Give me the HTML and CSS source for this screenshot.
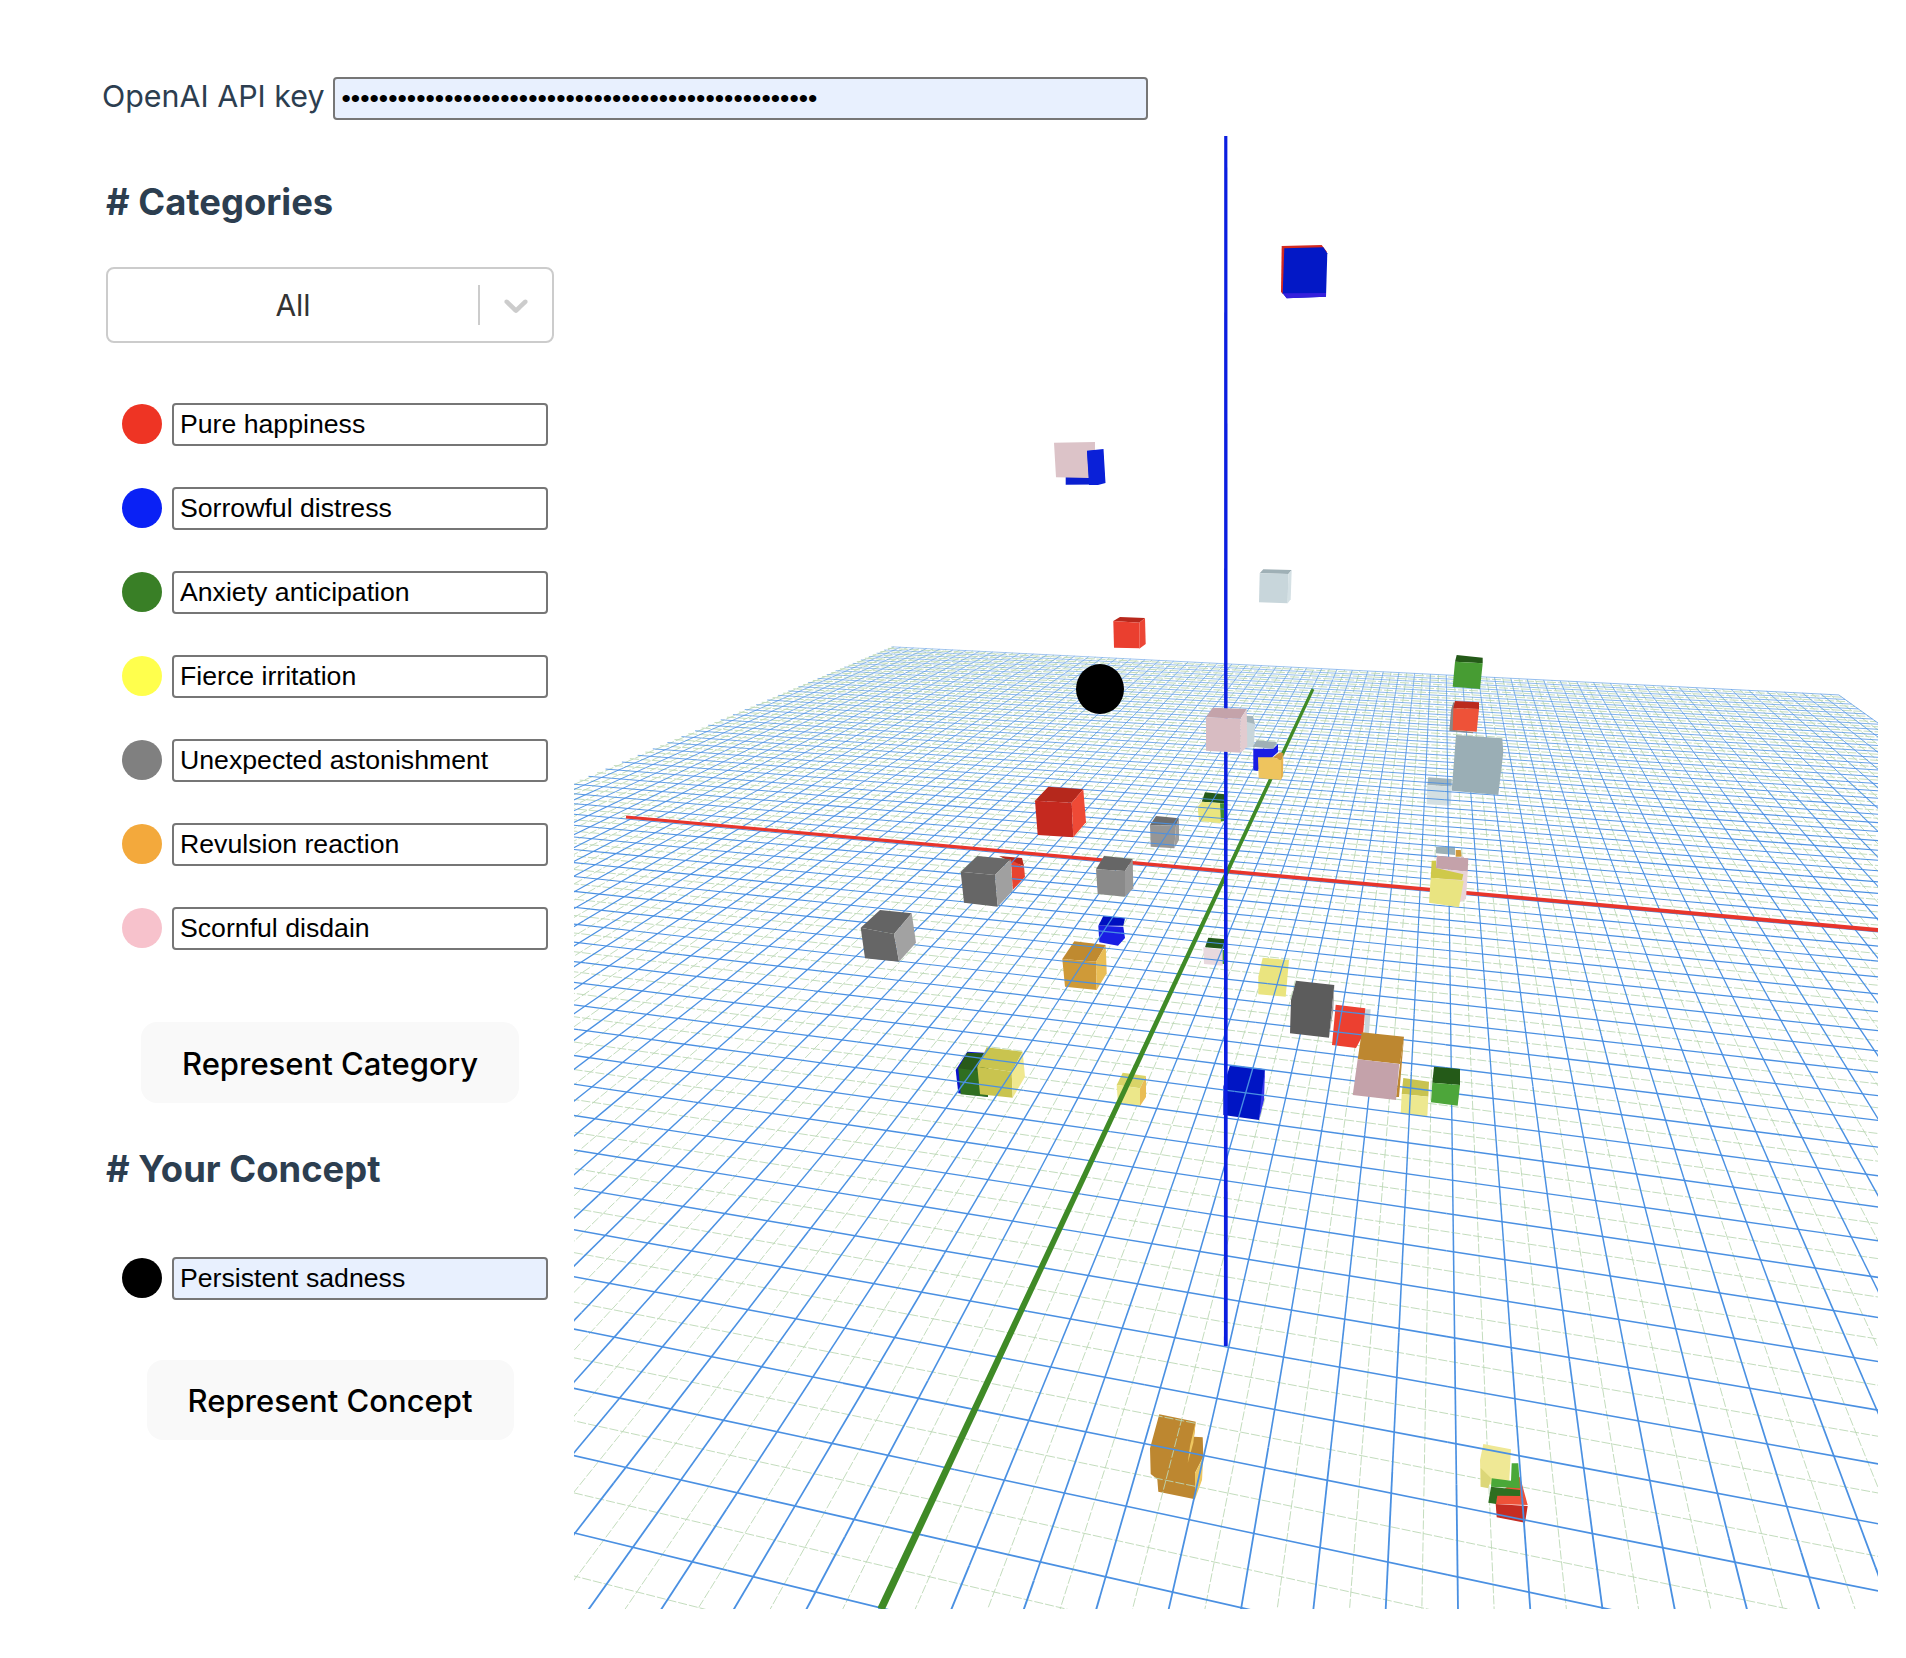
FILE: index.html
```html
<!DOCTYPE html>
<html lang="en">
<head>
  <meta charset="UTF-8" />
  <title>Concept Space</title>
  <link rel="stylesheet" href="styles.css">
</head>
<body>

  <div class="key-row">
    <label for="apiKey">OpenAI API key</label>
    <input type="password" id="apiKey" class="field field-filled" value="xxxxxxxxxxxxxxxxxxxxxxxxxxxxxxxxxxxxxxxxxxxxxxxxxxx" />
  </div>

  <div class="main">
    <div class="sidebar">
      <h2 class="first-title"># Categories</h2>

      <div class="select">
        <div class="select-value">All</div>
        <span class="select-sep"></span>
        <svg class="select-arrow" viewBox="0 0 20 20"><path d="M4.516 7.548c0.436-0.446 1.043-0.481 1.576 0l3.908 3.747 3.908-3.747c0.533-0.481 1.141-0.446 1.574 0 0.436 0.445 0.408 1.197 0 1.615-0.406 0.418-4.695 4.502-4.695 4.502-0.217 0.223-0.502 0.335-0.787 0.335s-0.57-0.112-0.789-0.335c0 0-4.287-4.084-4.695-4.502s-0.436-1.17 0-1.615z"></path></svg>
      </div>

      <div class="color-list">
        <div class="color-row">
          <span class="dot dot-red"></span>
          <input type="text" class="field" value="Pure happiness" />
        </div>
        <div class="color-row">
          <span class="dot dot-blue"></span>
          <input type="text" class="field" value="Sorrowful distress" />
        </div>
        <div class="color-row">
          <span class="dot dot-green"></span>
          <input type="text" class="field" value="Anxiety anticipation" />
        </div>
        <div class="color-row">
          <span class="dot dot-yellow"></span>
          <input type="text" class="field" value="Fierce irritation" />
        </div>
        <div class="color-row">
          <span class="dot dot-gray"></span>
          <input type="text" class="field" value="Unexpected astonishment" />
        </div>
        <div class="color-row">
          <span class="dot dot-orange"></span>
          <input type="text" class="field" value="Revulsion reaction" />
        </div>
        <div class="color-row">
          <span class="dot dot-pink"></span>
          <input type="text" class="field" value="Scornful disdain" />
        </div>
      </div>

      <button class="btn btn-category">Represent Category</button>

      <h2 class="second-title"># Your Concept</h2>

      <div class="color-row concept-row">
        <span class="dot dot-black"></span>
        <input type="text" class="field field-filled" value="Persistent sadness" />
      </div>

      <button class="btn btn-concept">Represent Concept</button>
    </div>

    <canvas id="plot" class="plot" width="1304" height="1473"></canvas>
  </div>

  <script src="plot.js"></script>

</body>
</html>
```

FILE: styles.css
```css
body {
  margin: 0;
  background: white;
  font-family: Inter, 'Liberation Sans', sans-serif;
  color: #2c3e50;
}

.key-row {
  display: flex;
  align-items: flex-start;
  gap: 9px;
  padding: 77px 0 0 102px;
}

.key-row label {
  font-size: 30.4px;
  line-height: 38px;
}

.field {
  box-sizing: border-box;
  height: 43px;
  padding: 2px 6px;
  background: white;
  border: 2px solid #767676;
  border-radius: 4px;
  font-family: 'Liberation Sans', Arial, sans-serif;
  font-size: 26.67px;
  color: black;
  outline: none;
}

.field-filled {
  background: #e8f0fe;
}

#apiKey {
  width: 815px;
}

.main {
  display: flex;
  align-items: flex-start;
  gap: 20px;
  padding: 16px 0 0 106px;
}

.sidebar {
  display: flex;
  flex-direction: column;
  width: 448px;
}

.sidebar h2 {
  margin: 0;
  font-size: 36.4px;
  line-height: 44px;
  font-weight: 700;
}

.first-title {
  padding-top: 44px;
}

.sidebar .second-title {
  margin-top: 44px;
}

.select {
  box-sizing: border-box;
  display: flex;
  align-items: center;
  height: 76px;
  margin-top: 43px;
  background: white;
  border: 2px solid #ccc;
  border-radius: 8px;
}

.select-value {
  flex: 1;
  text-align: center;
  font-size: 30px;
  color: #333;
}

.select-sep {
  width: 2px;
  height: 40px;
  background: #ccc;
}

.select-arrow {
  width: 40px;
  height: 40px;
  padding: 16px;
  fill: #ccc;
}

.color-list {
  display: flex;
  flex-direction: column;
  gap: 41px;
  margin-top: 60px;
}

.color-row {
  display: flex;
  align-items: flex-start;
  gap: 10px;
  padding-left: 16px;
}

.color-row .field {
  width: 376px;
}

.dot {
  flex: none;
  width: 40px;
  height: 40px;
  margin-top: 1px;
  border-radius: 50%;
}

.dot-red { background: #ee3424; }
.dot-blue { background: #0a21f5; }
.dot-green { background: #397f26; }
.dot-yellow { background: #ffff4d; }
.dot-gray { background: #808080; }
.dot-orange { background: #f3a93c; }
.dot-pink { background: #f7c2cc; }
.dot-black { background: black; }

.btn {
  align-self: center;
  padding: 2px 0 0;
  background: #f9f9f9;
  border: none;
  border-radius: 16px;
  font-family: Inter, sans-serif;
  font-size: 31px;
  font-weight: 500;
  color: black;
}

.btn-category {
  width: 378px;
  height: 81px;
  margin-top: 72px;
}

.btn-concept {
  width: 367px;
  height: 80px;
  margin-top: 60px;
  padding: 0;
}

.concept-row {
  margin-top: 66px;
}

.plot {
  display: block;
  width: 1304px;
  height: 1473px;
}
```

FILE: plot.js
```js
// the plot is a fixed snapshot, all coordinates below are page pixels
const canvas = document.getElementById('plot');
const ctx = canvas.getContext('2d');
ctx.translate(-574, -136);

// floor perspective: origin and the two vanishing points
const O = [1225.5, 873];
const VR = [-4084, 394];
const VG = [1443, 411];
const A = -0.00505;
const B = 0.02558;
const RANGE = 31;
const LEFT = -30.7;

function project(u, v) {
  const w = A * u + B * v + 1;
  return [
    (A * u * VR[0] + B * v * VG[0] + O[0]) / w,
    (A * u * VR[1] + B * v * VG[1] + O[1]) / w,
    w
  ];
}

function polys(list) {
  list.forEach(function(p) {
    ctx.fillStyle = p[0];
    ctx.beginPath();
    ctx.moveTo(p[1], p[2]);
    for (let i = 3; i < p.length; i += 2) {
      ctx.lineTo(p[i], p[i + 1]);
    }
    ctx.closePath();
    ctx.fill();
  });
}

function minorLine(a, b) {
  ctx.beginPath();
  ctx.moveTo(a[0], a[1]);
  ctx.lineTo(b[0], b[1]);
  ctx.stroke();
}

// major lines get thicker toward the viewer and fade toward the far edge
function majorLine(u0, v0, u1, v1) {
  const steps = 24;
  for (let i = 0; i < steps; i++) {
    const a = project(u0 + (u1 - u0) * i / steps, v0 + (v1 - v0) * i / steps);
    const b = project(u0 + (u1 - u0) * (i + 1) / steps, v0 + (v1 - v0) * (i + 1) / steps);
    ctx.lineWidth = 1.1 / Math.sqrt(a[2]);
    ctx.globalAlpha = Math.min(1, 1.4 - 0.4 * a[2]);
    ctx.beginPath();
    ctx.moveTo(a[0], a[1]);
    ctx.lineTo(b[0], b[1]);
    ctx.stroke();
  }
  ctx.globalAlpha = 1;
}

function drawMinor() {
  ctx.strokeStyle = '#bcd8b6';
  ctx.lineWidth = 0.9;
  ctx.setLineDash([9, 2]);
  for (let i = -RANGE + 0.5; i < RANGE; i++) {
    if (i > LEFT) minorLine(project(i, -RANGE), project(i, RANGE));
    minorLine(project(LEFT, i), project(RANGE, i));
  }
  ctx.setLineDash([]);
}

function drawMajor() {
  ctx.strokeStyle = '#4a90e2';
  for (let i = -RANGE; i <= RANGE; i++) {
    if (i > LEFT) majorLine(i, -RANGE, i, RANGE);
    majorLine(LEFT, i, RANGE, i);
  }
}

function axis(x0, y0, w0, x1, y1, w1, color) {
  const len = Math.hypot(x1 - x0, y1 - y0);
  const nx = -(y1 - y0) / len;
  const ny = (x1 - x0) / len;
  polys([[color,
    x0 + nx * w0 / 2, y0 + ny * w0 / 2,
    x1 + nx * w1 / 2, y1 + ny * w1 / 2,
    x1 - nx * w1 / 2, y1 - ny * w1 / 2,
    x0 - nx * w0 / 2, y0 - ny * w0 / 2
  ]]);
}

// far below the floor, every grid line shows over these
const deepCubes = [
  ['#bd8730', 1159.3,1414.3, 1195.7,1421.7, 1194,1436.7, 1202.7,1437.3, 1203.3,1456.7, 1195,1473, 1195,1499.3, 1158.3,1491.7, 1157.3,1479.3, 1150.7,1474, 1150,1448.3],
  ['#eec760', 1195.7,1421.7, 1193.3,1443, 1187.7,1463.3, 1190,1446],
  ['#eec760', 1203.3,1456.7, 1202,1480, 1195,1499.3, 1195,1473]
];

// just below the floor, only the major lines run over them
const underFloor = [
  ['#9cb0b5', 1436,846.7, 1455,846.7, 1455,855, 1436,853.3],
  ['#d09b3b', 1455.7,850, 1460.7,850, 1461.7,856.7, 1455.7,856.7],
  ['#a3b5bb', 1428.3,777.3, 1451.7,779, 1451.7,786.7, 1427.3,785],
  ['#d3dfe2', 1427.3,785, 1451.7,786.7, 1450.7,805.7, 1426.7,804.3],
  ['#6d6d6d', 1150,825, 1156,816, 1179,818.3, 1176,825.7],
  ['#969696', 1150,825, 1176,825.7, 1174.3,848.3, 1150.7,846.7],
  ['#9e9e9e', 1176,825.7, 1179,818.3, 1179,840, 1174.3,848.3],
  ['#24591a', 1201.7,801.7, 1205,792.3, 1225,794.3, 1225,803.3],
  ['#3f8f30', 1220,803.3, 1225,803.3, 1224.3,821, 1220,821.7],
  ['#e9e57f', 1197.7,806.7, 1202,801.7, 1220,803.3, 1221,823.3, 1199,820.7],
  ['#b8281c', 999,856, 1022,858, 1024,866, 1011,862],
  ['#e8432f', 1011,860, 1024,866.7, 1025,877, 1012.7,890],
  ['#0010c0', 1098.3,925.7, 1103.3,916, 1125,918.3, 1123.3,925.7],
  ['#1a1ee4', 1098.3,925.7, 1123.3,926.7, 1125,938, 1118,945.7, 1099.3,942.3],
  ['#bf8a30', 1062.3,959, 1074.3,941.3, 1105.7,945, 1096,961.7],
  ['#cf9a38', 1062.3,959, 1096,961.7, 1096.7,990, 1065,986.7],
  ['#e9bd55', 1096,961.7, 1105.7,945, 1106.7,973.3, 1096.7,990],
  ['#24591a', 1205,947.3, 1208.3,937.7, 1225.7,939.3, 1225.7,949],
  ['#e8d9de', 1203.3,947.3, 1223.3,950, 1222.7,965.7, 1204,964],
  ['#3f8f30', 1222.7,950, 1225,950, 1224.3,964, 1222.7,964],
  ['#eae47f', 1258.3,976.7, 1262.7,957.7, 1289,960, 1285.7,996.7, 1258.3,994.3],
  ['#c8d6db', 1365,1009.3, 1370.7,1009.3, 1369,1033.3, 1364.3,1033.3],
  ['#ec4030', 1335.7,1004.7, 1365.3,1008.3, 1363,1035, 1356,1048, 1332,1045],
  ['#c9c350', 1403.3,1078, 1429,1081.7, 1428.3,1096.7, 1401.7,1094],
  ['#ede88f', 1401.7,1094, 1428.3,1096.7, 1427.3,1116.7, 1400.7,1113.3],
  ['#0015c4', 1230,1065.3, 1265,1069.3, 1262.7,1096.7, 1259,1120, 1223.3,1115, 1223.3,1086.7],
  ['#3535e8', 1265,1069.3, 1264,1100, 1259,1120, 1262,1090],
  ['#0a12cc', 955.7,1070, 967.3,1051.7, 988,1053, 988,1096.7, 958.3,1093.3],
  ['#2f6f20', 958.3,1068.3, 967.3,1052.7, 988,1054, 988,1097, 960.7,1094.3],
  ['#285a1a', 958.3,1068.3, 967.3,1052.7, 990,1054, 988,1072],
  ['#c9c44f', 977.3,1066.7, 986.7,1047.3, 1022.7,1051.7, 1011.7,1071.7],
  ['#c9c44f', 977.3,1066.7, 1011.7,1071.7, 1012.7,1097.7, 980,1094.3],
  ['#f0e88f', 1011.7,1071.7, 1022.7,1051.7, 1025,1076.7, 1012.7,1097.7],
  ['#d9d468', 1116.7,1085, 1122.7,1072.7, 1146,1076, 1140,1088.3],
  ['#ece78a', 1116.7,1085, 1140,1088.3, 1140,1106, 1118,1104],
  ['#e9bd55', 1140,1088.3, 1146,1076, 1146,1097, 1140,1106],
  ['#efe895', 1483.3,1444, 1511,1449.3, 1509.3,1480, 1480.7,1486.7, 1480,1460],
  ['#dcd778', 1480.7,1468, 1491,1478, 1488.3,1488.3, 1480.7,1486.7],
  ['#ee5238', 1496.7,1495, 1520,1476.7, 1527.7,1505, 1495.7,1504],
  ['#c62c22', 1495.7,1504, 1527.7,1506, 1525,1522.7, 1496.7,1517.3],
  ['#4aa838', 1491.7,1478.3, 1511,1480.7, 1511.7,1463.3, 1518.3,1463.3, 1520,1488.3, 1491,1486.7],
  ['#2f6f20', 1491,1486.7, 1520,1490, 1520,1496, 1497.3,1495.7, 1496,1504, 1488.3,1502.7]
];

// cubes above the floor, painted back to front
const overFloor = [
  ['#d42a20', 1281.7,246, 1321.7,245, 1327,252, 1283,294, 1281,292],
  ['#0318c6', 1284.3,248.3, 1323.3,247.3, 1327.3,253.3, 1326,296.7, 1286.7,298.3, 1282.7,293.3],
  ['#3520dc', 1282.7,293.3, 1326,293, 1326,296.7, 1286.7,298.3],
  ['#0a1fd0', 1065.7,452, 1098,450, 1098,484.5, 1065.7,484.7],
  ['#dcc3c8', 1054,442.7, 1095,442, 1095,450, 1087,450.7, 1089,478, 1056,477.3],
  ['#0a20d8', 1087,450.7, 1103.5,449, 1105.5,483, 1098,485, 1089,485],
  ['#9fb0b6', 1259.7,573.3, 1263.3,569.3, 1291.7,570, 1288.3,574],
  ['#c8d6db', 1259.7,573.3, 1288.3,574, 1287.7,603.3, 1259,602.3],
  ['#d5e1e5', 1288.3,574, 1291.7,570, 1290.7,599.3, 1287.7,603.3],
  ['#b8281c', 1113.3,621, 1120,617, 1145,618, 1139.3,622.7],
  ['#ea3f2f', 1113.3,621, 1139.3,622.7, 1139.3,648.3, 1114,647.7],
  ['#ec4635', 1139.3,622.7, 1145,618, 1145.7,644, 1139.3,648.7],
  ['#a5b6bc', 1246,716, 1253,716, 1255,724, 1247,724],
  ['#c8d6db', 1247,722, 1255,724, 1254,747, 1246,748],
  ['#c4a3aa', 1206,717.3, 1212.7,707.7, 1246.7,709, 1240.7,718.7],
  ['#d8bcc2', 1206,717.3, 1240.7,718.7, 1240.7,752.7, 1206,750.7],
  ['#e2ccd0', 1240.7,718.7, 1246.7,709, 1247.3,746.7, 1240.7,752.7],
  ['#9fb0b6', 1252.7,746.7, 1256.7,740.3, 1276.7,742, 1273.3,748.7],
  ['#1a1ee4', 1253.3,748.7, 1273.3,748.7, 1278,744, 1278,752, 1258,770, 1257.5,771, 1253.3,770],
  ['#cf9540', 1273,757.3, 1280,752.3, 1283.3,753.3, 1281,760],
  ['#eec45e', 1258,757.3, 1273,757.3, 1281,760, 1281,780, 1258.7,778.3],
  ['#e6b24f', 1281,760, 1283.3,753.3, 1283,776, 1281,780],
  ['#b5281c', 1035,800.7, 1048.3,786.7, 1083.3,789.3, 1071.7,802.7],
  ['#c5291f', 1035,800.7, 1071.7,802.7, 1073.3,837.3, 1037.7,835],
  ['#ee4a36', 1071.7,802.7, 1083.3,789.3, 1086,822.3, 1073.3,837.3],
  ['#696969', 960.7,871.7, 977.3,856, 1010.7,859.3, 995,875],
  ['#666666', 960.7,871.7, 995,875, 997.7,906.7, 964,902.7],
  ['#a0a0a0', 995,875, 1010.7,859.3, 1012.7,890.7, 997.7,906.7],
  ['#666666', 1096,869.3, 1104,856, 1132.7,859, 1125,871],
  ['#8a8a8a', 1096,869.3, 1125,871, 1125,896.7, 1097.7,894],
  ['#999999', 1125,871, 1132.7,859, 1133.3,888.3, 1125,896.7],
  ['#646464', 860.7,927.7, 880,910, 911.7,913.3, 894,934],
  ['#666666', 860.7,927.7, 894,934, 899,961.7, 865,958.3],
  ['#a2a2a2', 894,934, 911.7,913.3, 916,942.7, 899,961.7],
  ['#5c5c5c', 1296,980.7, 1334.3,985, 1329,1037.7, 1290,1033.3, 1291,1000],
  ['#999999', 1334.3,985, 1333.3,1010, 1329,1037.7],
  ['#bd8730', 1361.7,1032.3, 1404,1036.7, 1400,1064, 1357.7,1059.3],
  ['#bd8730', 1400,1064, 1404,1036.7, 1399,1097, 1396,1097],
  ['#c4a2aa', 1357.7,1059.3, 1399.3,1064, 1396,1100, 1352.7,1095],
  ['#245a18', 1434,1066.7, 1460,1069, 1460,1085, 1432.3,1082.7],
  ['#4da63a', 1432.3,1082.7, 1460,1085, 1457.7,1105.7, 1431,1102.3],
  ['#245a18', 1455,661.7, 1456.7,655, 1482.7,657.7, 1482.7,663.3],
  ['#479c33', 1455,661.7, 1482.7,663.3, 1480,689, 1452.7,686.7],
  ['#888888', 1451,710, 1453.3,702.3, 1457,703, 1455,730, 1473,732, 1473,733.3, 1449.3,731],
  ['#bb2a1e', 1453.3,708.3, 1455,701, 1479,702.3, 1479,709],
  ['#ee5238', 1453.3,708.3, 1479,709, 1476.7,731.7, 1452.7,730],
  ['#9aaeb5', 1456,735, 1502.3,738.3, 1503.3,752.3, 1498.3,795, 1451.7,790.7],
  ['#dcc3c8', 1461,856, 1464,857, 1464,862, 1461,862],
  ['#c4a2aa', 1436.7,855.7, 1468.3,858.3, 1467.7,871.7, 1436,868.3],
  ['#e8d3d8', 1436,868.3, 1467.7,871.7, 1466,899, 1458,903, 1440,880],
  ['#cfc94a', 1431.7,860.7, 1436,860.7, 1436,868, 1463.3,874.3, 1462,880, 1430.7,878],
  ['#e9e481', 1430.7,877.7, 1463.7,880.7, 1459,907.3, 1429,902.7]
];

polys(deepCubes);
drawMinor();
polys(underFloor);
drawMajor();

axis(626, 817, 3, 1878, 930, 4, '#e8352b');
axis(1313, 689, 3, 881, 1609, 7.5, '#3f8a26');
axis(1225.8, 136, 3.2, 1225.8, 1346, 3.8, '#0b1ee0');

polys(overFloor);

// the concept itself, a black sphere
ctx.fillStyle = 'black';
ctx.beginPath();
ctx.ellipse(1100, 689, 24, 25, 0, 0, Math.PI * 2);
ctx.fill();
```
